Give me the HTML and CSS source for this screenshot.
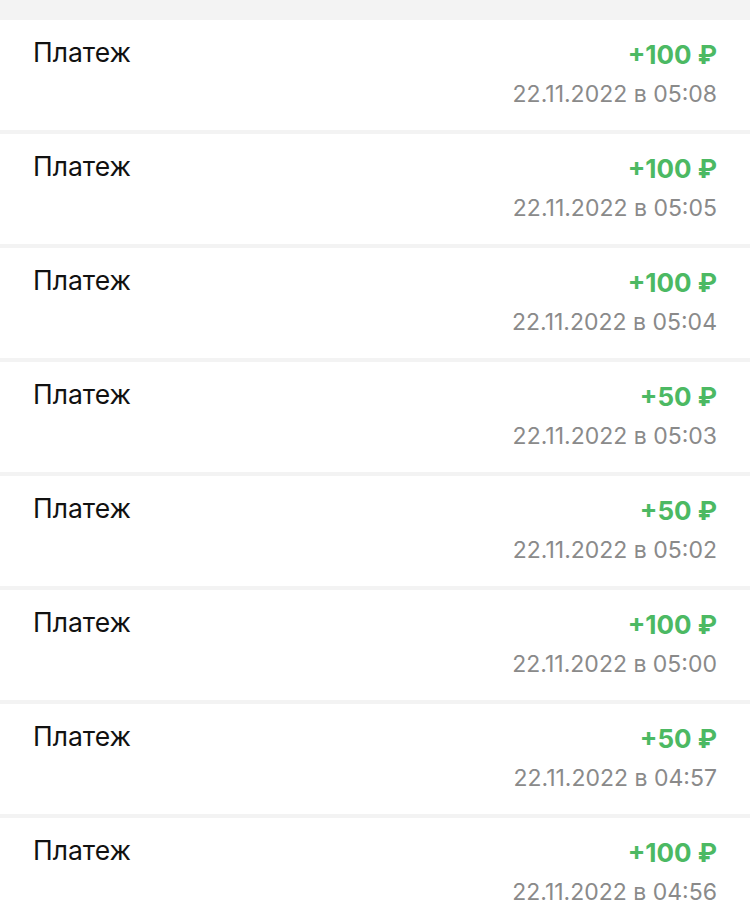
FILE: index.html
```html
<!doctype html>
<html lang="ru">
  <head>
    <meta charset="UTF-8" />
    <meta name="viewport" content="width=device-width, initial-scale=1.0" />
    <title>Платежи</title>
    <link rel="stylesheet" href="styles.css">
  </head>
  <body>
    <div class="list">
      <div class="item">
        <div class="item-title">Платеж</div>
        <div class="item-info">
          <div class="amount">+100 ₽</div>
          <div class="date">22.11.2022 в 05:08</div>
        </div>
      </div>
      <div class="item">
        <div class="item-title">Платеж</div>
        <div class="item-info">
          <div class="amount">+100 ₽</div>
          <div class="date">22.11.2022 в 05:05</div>
        </div>
      </div>
      <div class="item">
        <div class="item-title">Платеж</div>
        <div class="item-info">
          <div class="amount">+100 ₽</div>
          <div class="date">22.11.2022 в 05:04</div>
        </div>
      </div>
      <div class="item">
        <div class="item-title">Платеж</div>
        <div class="item-info">
          <div class="amount">+50 ₽</div>
          <div class="date">22.11.2022 в 05:03</div>
        </div>
      </div>
      <div class="item">
        <div class="item-title">Платеж</div>
        <div class="item-info">
          <div class="amount">+50 ₽</div>
          <div class="date">22.11.2022 в 05:02</div>
        </div>
      </div>
      <div class="item">
        <div class="item-title">Платеж</div>
        <div class="item-info">
          <div class="amount">+100 ₽</div>
          <div class="date">22.11.2022 в 05:00</div>
        </div>
      </div>
      <div class="item">
        <div class="item-title">Платеж</div>
        <div class="item-info">
          <div class="amount">+50 ₽</div>
          <div class="date">22.11.2022 в 04:57</div>
        </div>
      </div>
      <div class="item">
        <div class="item-title">Платеж</div>
        <div class="item-info">
          <div class="amount">+100 ₽</div>
          <div class="date">22.11.2022 в 04:56</div>
        </div>
      </div>
    </div>
  </body>
</html>
```

FILE: styles.css
```css
* {
  box-sizing: border-box;
  margin: 0;
  padding: 0;
}

body {
  font-family: Inter, "Noto Sans", sans-serif;
  background: #f3f3f3;
  color: #111;
  overflow: hidden;
}

.list {
  display: flex;
  flex-direction: column;
  gap: 4px;
  padding-top: 20px;
}

.item {
  background: #fff;
  height: 110px;
  padding: 16px 33px 0;
  display: flex;
  justify-content: space-between;
  align-items: flex-start;
}

.item-title {
  font-size: 26.5px;
  line-height: 32px;
}

.item-info {
  text-align: right;
}

.amount {
  font-size: 26px;
  font-weight: 700;
  line-height: 38px;
  color: #4cb963;
}

.date {
  font-size: 23px;
  line-height: 40px;
  color: #8a8a8a;
}
```
